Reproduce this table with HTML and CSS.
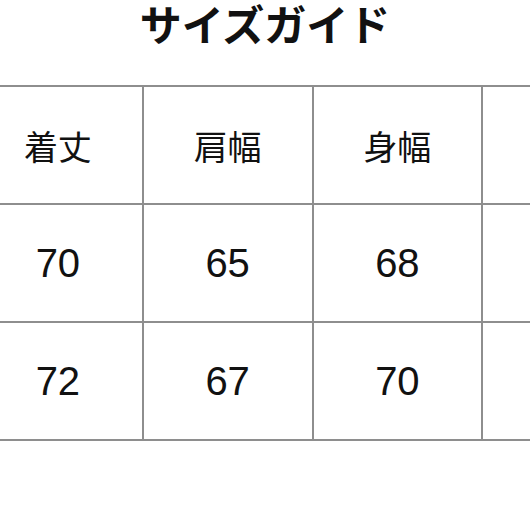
FILE: index.html
```html
<!DOCTYPE html>
<html lang="ja">
<head>
<meta charset="utf-8">
<link rel="stylesheet" href="styles.css">
</head>
<body>
<div class="page">
  <h1 class="title">サイズガイド</h1>
  <table class="size-table">
    <tr class="head">
      <td>着丈</td><td>肩幅</td><td>身幅</td><td></td>
    </tr>
    <tr>
      <td>70</td><td>65</td><td>68</td><td></td>
    </tr>
    <tr>
      <td>72</td><td>67</td><td>70</td><td></td>
    </tr>
  </table>
</div>
</body>
</html>
```
FILE: styles.css
```css
html, body {
  margin: 0;
  padding: 0;
  background: #fff;
}
.page {
  width: 530px;
  height: 530px;
  overflow: hidden;
}
.title {
  margin: 0;
  height: 85px;
  box-sizing: border-box;
  padding-top: 0;
  line-height: 46px;
  text-align: center;
  font-family: "Noto Sans CJK JP", sans-serif;
  font-weight: 700;
  font-size: 42px;
  color: #111;
}
.size-table {
  margin-left: -28px;
  width: 681px;
  min-width: 681px;
  border-collapse: collapse;
  table-layout: fixed;
}
.size-table td {
  height: 116px;
  padding: 0;
  border: 2px solid #8e8e8e;
  text-align: center;
  vertical-align: middle;
  font-family: "Liberation Sans", Arial, sans-serif;
  font-size: 40px;
  color: #111;
}
.size-table .head td {
  font-family: "Noto Sans CJK JP", sans-serif;
  font-size: 34px;
}
```
